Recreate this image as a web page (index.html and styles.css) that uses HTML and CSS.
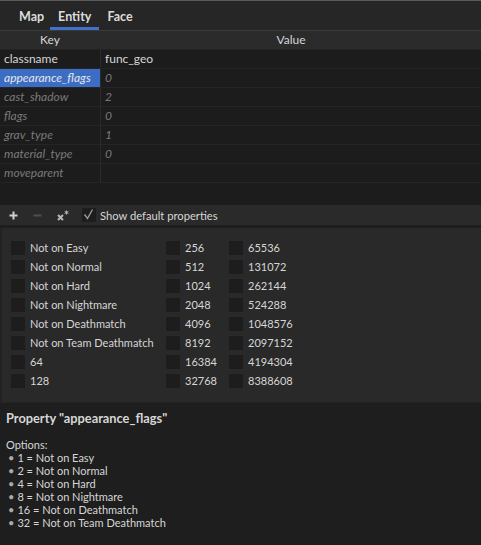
FILE: index.html
```html
<!DOCTYPE html>
<html lang="en">

<head>
    <meta charset="UTF-8">
    <title>Entity properties</title>
    <link rel="stylesheet" href="styles.css">
</head>

<body>
    <div class="topline"></div>
    <div class="tabs">
        <span class="tab">Map</span>
        <span class="tab active">Entity</span>
        <span class="tab">Face</span>
    </div>

    <div class="props">
        <div class="head key">Key</div>
        <div class="head">Value</div>

        <div class="cell key">classname</div>
        <div class="cell">func_geo</div>

        <div class="cell key def selected">appearance_flags</div>
        <div class="cell def">0</div>

        <div class="cell key def">cast_shadow</div>
        <div class="cell def">2</div>

        <div class="cell key def">flags</div>
        <div class="cell def">0</div>

        <div class="cell key def">grav_type</div>
        <div class="cell def">1</div>

        <div class="cell key def">material_type</div>
        <div class="cell def">0</div>

        <div class="cell key def">moveparent</div>
        <div class="cell def"></div>
    </div>

    <div class="toolbar">
        <span class="tool">
            <svg width="9" height="9" viewBox="0 0 9 9"><path d="M4.5 0.5v8M0.5 4.5h8" stroke="#d0d0d0" stroke-width="2" /></svg>
        </span>
        <span class="tool">
            <svg width="9" height="9" viewBox="0 0 9 9"><path d="M0.5 4.5h8" stroke="#4e4e4e" stroke-width="2" /></svg>
        </span>
        <span class="tool">
            <svg width="12" height="12" viewBox="0 0 12 12">
                <path d="M1 5l5 5M6 5l-5 5" stroke="#b8b8b8" stroke-width="2" />
                <path d="M9.5 0.5v4M7.6 1.5l3.8 2M7.6 3.5l3.8-2" stroke="#b8b8b8" stroke-width="1" />
            </svg>
        </span>
        <span class="check on"><svg width="13" height="13" viewBox="0 0 13 13"><path d="M2.5 6.5l3 4 5-9" stroke="#9a9a9a" stroke-width="1.4" fill="none" /></svg></span>
        <span class="checklabel">Show default properties</span>
    </div>

    <div class="gap"></div>

    <div class="flags">
        <div class="col c1">
            <div class="flag"><span class="check"></span>Not on Easy</div>
            <div class="flag"><span class="check"></span>Not on Normal</div>
            <div class="flag"><span class="check"></span>Not on Hard</div>
            <div class="flag"><span class="check"></span>Not on Nightmare</div>
            <div class="flag"><span class="check"></span>Not on Deathmatch</div>
            <div class="flag"><span class="check"></span>Not on Team Deathmatch</div>
            <div class="flag"><span class="check"></span>64</div>
            <div class="flag"><span class="check"></span>128</div>
        </div>
        <div class="col c2">
            <div class="flag"><span class="check"></span>256</div>
            <div class="flag"><span class="check"></span>512</div>
            <div class="flag"><span class="check"></span>1024</div>
            <div class="flag"><span class="check"></span>2048</div>
            <div class="flag"><span class="check"></span>4096</div>
            <div class="flag"><span class="check"></span>8192</div>
            <div class="flag"><span class="check"></span>16384</div>
            <div class="flag"><span class="check"></span>32768</div>
        </div>
        <div class="col">
            <div class="flag"><span class="check"></span>65536</div>
            <div class="flag"><span class="check"></span>131072</div>
            <div class="flag"><span class="check"></span>262144</div>
            <div class="flag"><span class="check"></span>524288</div>
            <div class="flag"><span class="check"></span>1048576</div>
            <div class="flag"><span class="check"></span>2097152</div>
            <div class="flag"><span class="check"></span>4194304</div>
            <div class="flag"><span class="check"></span>8388608</div>
        </div>
    </div>

    <div class="help">
        <div class="help_title">Property "appearance_flags"</div>
        <div class="help_text">
            <div>Options:</div>
            <ul>
                <li>1 = Not on Easy</li>
                <li>2 = Not on Normal</li>
                <li>4 = Not on Hard</li>
                <li>8 = Not on Nightmare</li>
                <li>16 = Not on Deathmatch</li>
                <li>32 = Not on Team Deathmatch</li>
            </ul>
        </div>
    </div>
</body>

</html>
```

FILE: styles.css
```css
* {
    margin: 0;
    padding: 0;
    box-sizing: border-box;
}

body {
    width: 481px;
    height: 545px;
    overflow: hidden;
    background: #1c1c1c;
    color: #d6d6d6;
    font-family: Lato, "Noto Sans", sans-serif;
    font-size: 11px;
}

.topline {
    height: 1px;
    background: #5a5a5a;
}

/* tabs */
.tabs {
    height: 30px;
    background: #262626;
    border-bottom: 1px solid #3a3a3a;
    display: flex;
    padding-left: 11px;
}

.tab {
    font-weight: bold;
    font-size: 12.5px;
    padding: 6px 8px 0;
    height: 29px;
    line-height: 20px;
    color: #dcdcdc;
    border-bottom: 3px solid transparent;
}

.tab:first-child {
    padding-right: 6px;
}

.tab.active {
    border-bottom-color: #3f72c8;
}

/* key / value table */
.props {
    display: grid;
    grid-template-columns: 101px 1fr;
    grid-auto-rows: 19px;
    height: 174px;
    font-size: 12px;
}

.head {
    background: #2b2b2b;
    text-align: center;
    line-height: 18px;
    border-bottom: 1px solid #222;
}

.cell {
    line-height: 18px;
    border-bottom: 1px solid #252525;
    padding-left: 4px;
    white-space: nowrap;
    overflow: hidden;
}

.key {
    border-right: 1px solid #2a2a2a;
}

.def {
    font-style: italic;
    color: #7a7a7a;
}

.selected {
    background: #3c6dc4;
    color: #e6e6e6;
}

/* toolbar */
.toolbar {
    height: 20px;
    background: #2a2a2a;
    display: flex;
    align-items: center;
    padding-left: 9px;
}

.tool {
    width: 24px;
    display: flex;
    align-items: center;
    height: 20px;
}

.tool:nth-child(3) {
    width: 24px;
    padding-top: 1px;
}

.check {
    width: 14px;
    height: 14px;
    background: #1d1d1d;
    display: inline-block;
    flex: none;
}

.check.on {
    margin-left: 1px;
}

.checklabel {
    margin-left: 4px;
    font-size: 11.2px;
}

.gap {
    height: 3px;
    background: #1e1e1e;
}

/* flag checkboxes */
.flags {
    height: 174px;
    background: #292929;
    border-left: 2px solid #222;
    display: flex;
    padding: 10px 0 0 9px;
}

.col {
    display: flex;
    flex-direction: column;
}

.c1 {
    width: 155px;
}

.c2 {
    width: 63px;
}

.flag {
    height: 19px;
    display: flex;
    align-items: center;
    white-space: nowrap;
}

.flag .check {
    margin-right: 5px;
}

/* help */
.help {
    border-top: 1px solid #232323;
    background: #1e1e1e;
    height: 143px;
    padding: 7px 6px;
}

.help_title {
    font-weight: bold;
    font-size: 12.8px;
    line-height: 16px;
}

.help_text {
    margin-top: 12px;
    line-height: 13px;
}

ul {
    list-style: none;
}

li {
    padding-left: 2px;
}

li::before {
    content: "\2022";
    color: #aaa;
    margin-right: 3px;
}
```
